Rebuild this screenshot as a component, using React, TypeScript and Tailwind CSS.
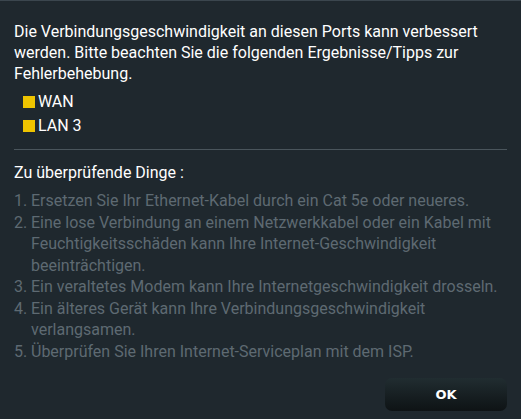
export default function App() {
  const checks = [
    "Ersetzen Sie Ihr Ethernet-Kabel durch ein Cat 5e oder neueres.",
    "Eine lose Verbindung an einem Netzwerkkabel oder ein Kabel mit Feuchtigkeitsschäden kann Ihre Internet-Geschwindigkeit beeinträchtigen.",
    "Ein veraltetes Modem kann Ihre Internetgeschwindigkeit drosseln.",
    "Ein älteres Gerät kann Ihre Verbindungsgeschwindigkeit verlangsamen.",
    "Überprüfen Sie Ihren Internet-Serviceplan mit dem ISP.",
  ];

  return (
    <div className="h-[419px] w-[521px] border-t border-[#3b464e] bg-[#1f282e] px-[14px] pt-[20px] font-['Roboto',sans-serif] text-[16px]">
      <p className="leading-[21px] text-white">
        Die Verbindungsgeschwindigkeit an diesen Ports kann verbessert werden. Bitte beachten Sie die folgenden Ergebnisse/Tipps zur Fehlerbehebung.
      </p>

      <ul className="mt-[6px] pl-[9px] text-white">
        {["WAN", "LAN 3"].map((port) => (
          <li key={port} className="flex h-[24px] items-center">
            <span className="mr-[3px] h-[12px] w-[12px] bg-[#eec400]" />
            {port}
          </li>
        ))}
      </ul>

      <div className="mt-[11px] border-t border-[#4a555c]" />

      <h3 className="mt-[12px] leading-[22px] text-white">Zu überprüfende Dinge :</h3>

      <ol className="mt-[6px] text-[#5e6a72]">
        {checks.map((text, i) => (
          <li key={i} className="flex leading-[21.5px]">
            <span className="w-[17px] shrink-0">{i + 1}.</span>
            <span>{text}</span>
          </li>
        ))}
      </ol>

      <div className="mt-[16px] flex justify-end">
        <button className="h-[33px] w-[122px] rounded-[7px] bg-gradient-to-b from-[#212d31] to-[#0e1315] font-['DejaVu_Sans',sans-serif] text-[13px] font-bold text-white">
          OK
        </button>
      </div>
    </div>
  );
}
